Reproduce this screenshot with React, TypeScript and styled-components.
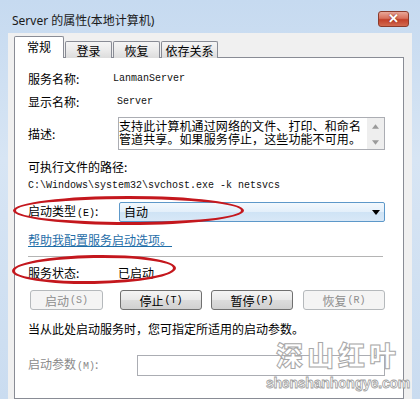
import React from 'react';
import styled, { createGlobalStyle } from 'styled-components';

const Global = createGlobalStyle`
  html, body { margin: 0; padding: 0; }
  body {
    width: 420px; height: 399px; overflow: hidden;
    font-family: "Noto Sans CJK SC", "Noto Sans", sans-serif;
    font-size: 12px; color: #000;
  }
`;

const Window = styled.div`
  position: relative;
  width: 420px; height: 399px; box-sizing: border-box;
  background: linear-gradient(180deg, #c6daf0 0%, #d7e5f4 40%, #cadcf0 100%);
  padding: 0 8px 0 8px;
  display: flex; flex-direction: column; overflow: hidden;
`;

const TitleBar = styled.div`
  height: 33px; flex: none;
  display: flex; align-items: center; justify-content: space-between;
  padding: 0 3px 0 4px;
`;

const Title = styled.div`
  font-family: "Noto Sans", "Noto Sans CJK SC", sans-serif;
  font-size: 12px; color: #1a1a1a; margin-top: 6px;
`;

const CloseBtn = styled.div`
  width: 31px; height: 16px; box-sizing: border-box; margin-top: 4px;
  border: 1px solid #8b3b2c; border-radius: 3px;
  background: linear-gradient(180deg, #e9a798 0%, #d8705c 45%, #c2402a 55%, #d26a50 100%);
  display: flex; align-items: center; justify-content: center;
  color: #fff; font-family: "Liberation Sans", sans-serif; font-weight: bold; font-size: 13px;
  text-shadow: 0 0 2px #7a2010;
`;

const Body = styled.div`
  flex: 1; background: #f0f0f0;
  padding: 3px 8px 0 6px;
  display: flex; flex-direction: column;
`;

const TabStrip = styled.div`
  height: 22px; display: flex; align-items: flex-end; flex: none;
`;

const Tab = styled.div<{ $active?: boolean; $w: number }>`
  position: relative; z-index: ${p => (p.$active ? 2 : 0)};
  box-sizing: border-box; width: ${p => p.$w}px;
  height: ${p => (p.$active ? 22 : 17)}px;
  border: 1px solid #898c95; border-bottom: none;
  border-radius: 2px 2px 0 0;
  background: ${p => (p.$active ? '#fff' : 'linear-gradient(180deg, #f5f5f5 0%, #ebebeb 50%, #dcdcdc 100%)')};
  display: flex; align-items: center; justify-content: center;
  padding-bottom: ${p => (p.$active ? 3 : 0)}px;
  font-size: 12px; margin-left: ${p => (p.$active ? 0 : -1)}px;
  & + & { margin-left: ${p => (p.$active ? 0 : 1)}px; }
`;

const Panel = styled.div`
  flex: 1; margin-top: -1px; background: #fff;
  border: 1px solid #898c95;
  padding: 13px 18px 0 13px;
  display: flex; flex-direction: column;
`;

const Row = styled.div<{ $label: number; $mt: number }>`
  display: grid; grid-template-columns: ${p => p.$label}px 1fr;
  align-items: center; margin-top: ${p => p.$mt}px;
  line-height: 16px;
`;

const Label = styled.span<{ $disabled?: boolean }>`
  color: ${p => (p.$disabled ? '#8a8a8a' : '#000')};
  white-space: nowrap;
`;

const Mono = styled.span`
  font-family: "Liberation Mono", monospace; font-size: 10px; color: #111;
`;

const Line = styled.div<{ $mt: number }>`
  margin-top: ${p => p.$mt}px; line-height: 16px; white-space: nowrap;
`;

const DescBox = styled.div`
  height: 33px; box-sizing: border-box;
  border: 1px solid #abadb3; background: #fff;
  display: flex;
`;

const DescText = styled.div`
  flex: 1; font-size: 12px; line-height: 13px; padding: 1px 0 0 0; overflow: hidden;
  letter-spacing: 0.1px;
`;

const ScrollBar = styled.div`
  width: 17px; background: #eeeeee;
  display: flex; flex-direction: column; justify-content: space-between; align-items: center;
  padding: 6px 0 4px;
`;

const Combo = styled.div`
  height: 20px; box-sizing: border-box; margin-left: 1px;
  border: 1px solid #5d98c9; border-radius: 2px;
  background: linear-gradient(180deg, #f2f8fd 0%, #e3effa 50%, #cfe3f5 51%, #d8e8f7 100%);
  display: flex; align-items: center; justify-content: space-between;
  padding: 0 4px 0 4px;
`;

const Link = styled.a`
  color: #1f6ea8; text-decoration: underline; cursor: pointer;
`;

const Separator = styled.div`
  margin-top: 8px; height: 0; border-top: 1px solid #b4b4b4; margin-right: 2px;
`;

const ButtonRow = styled.div`
  display: flex; margin-top: 9px; margin-left: 2px;
`;

const Button = styled.div<{ $w: number; $ml: number; $disabled?: boolean }>`
  width: ${p => p.$w}px; height: 20px; box-sizing: border-box;
  margin-left: ${p => p.$ml}px;
  border: 1px solid ${p => (p.$disabled ? '#b5b9bc' : '#707070')};
  border-radius: 3px;
  background: ${p => (p.$disabled ? '#f4f4f4' : 'linear-gradient(180deg, #f4f4f4 0%, #e9e9e9 48%, #dcdcdc 52%, #d0d0d0 100%)')};
  color: ${p => (p.$disabled ? '#8d8d8d' : '#000')};
  display: flex; align-items: center; justify-content: center;
  font-size: 12px;
`;

const Key = styled.span`
  font-family: "Liberation Mono", monospace; font-size: 10px; margin-left: 1px;
`;

const ParamBox = styled.div`
  height: 21px; box-sizing: border-box;
  border: 1px solid #abadb3; background: #fff;
`;

const Ellipse = styled.div<{ $l: number; $t: number; $w: number; $h: number; $r: number }>`
  position: absolute; left: ${p => p.$l}px; top: ${p => p.$t}px;
  width: ${p => p.$w}px; height: ${p => p.$h}px; box-sizing: border-box;
  border: 3px solid #c4171d; border-radius: 50%;
  transform: rotate(${p => p.$r}deg);
  pointer-events: none;
`;

const Watermark = styled.div`
  position: absolute; left: 268px; top: 340px; width: 140px;
  display: flex; flex-direction: column; align-items: center;
  color: #fff; pointer-events: none;
`;

const WmBig = styled.div`
  font-family: "Noto Sans CJK SC", sans-serif; font-weight: 900;
  font-size: 27px; line-height: 29px; height: 29px; letter-spacing: 4px;
  -webkit-text-stroke: 1px #a8a8a8;
`;

const WmSmall = styled.div`
  font-family: "Liberation Sans", sans-serif; font-weight: bold;
  font-size: 14px; line-height: 16px; letter-spacing: -0.2px; margin-top: 6px;
  -webkit-text-stroke: 0.8px #a0a0a0;
`;

const Arrow = ({ up, size = 7, color = '#4a4a4a' }: { up?: boolean; size?: number; color?: string }) => (
  <svg width={size} height={Math.ceil(size / 2) + 1} viewBox="0 0 8 5">
    {up ? <polygon points="0,5 4,0 8,5" fill={color} /> : <polygon points="0,0 8,0 4,5" fill={color} />}
  </svg>
);

export default function App() {
  return (
    <>
      <Global />
      <Window>
        <TitleBar>
          <Title>Server 的属性(本地计算机)</Title>
          <CloseBtn>✕</CloseBtn>
        </TitleBar>
        <Body>
          <TabStrip>
            <Tab $active $w={50}>常规</Tab>
            <Tab $w={47}>登录</Tab>
            <Tab $w={47}>恢复</Tab>
            <Tab $w={57}>依存关系</Tab>
          </TabStrip>
          <Panel>
            <Row $label={85} $mt={0}>
              <Label>服务名称:</Label>
              <Mono>LanmanServer</Mono>
            </Row>
            <Row $label={89} $mt={7}>
              <Label>显示名称:</Label>
              <Mono>Server</Mono>
            </Row>
            <Row $label={90} $mt={7}>
              <Label>描述:</Label>
              <DescBox>
                <DescText>
                  支持此计算机通过网络的文件、打印、和命名管道共享。如果服务停止，这些功能不可用。
                </DescText>
                <ScrollBar>
                  <Arrow up size={7} color="#9a9a9a" />
                  <Arrow size={7} color="#9a9a9a" />
                </ScrollBar>
              </DescBox>
            </Row>
            <Line $mt={9}>可执行文件的路径:</Line>
            <Line $mt={0}><Mono>C:\Windows\system32\svchost.exe -k netsvcs</Mono></Line>
            <Row $label={90} $mt={8}>
              <Label>启动类型<Key>(E)</Key>:</Label>
              <Combo>
                <span>自动</span>
                <Arrow size={8} color="#000" />
              </Combo>
            </Row>
            <Line $mt={10}><Link>帮助我配置服务启动选项。</Link></Line>
            <Separator />
            <Row $label={90} $mt={8}>
              <Label>服务状态:</Label>
              <span>已启动</span>
            </Row>
            <ButtonRow>
              <Button $disabled $w={73} $ml={0}>启动<Key>(S)</Key></Button>
              <Button $w={82} $ml={17}>停止<Key>(T)</Key></Button>
              <Button $w={82} $ml={9}>暂停<Key>(P)</Key></Button>
              <Button $disabled $w={82} $ml={10}>恢复<Key>(R)</Key></Button>
            </ButtonRow>
            <Line $mt={11}>当从此处启动服务时，您可指定所适用的启动参数。</Line>
            <Row $label={109} $mt={18}>
              <Label $disabled>启动参数<Key>(M)</Key>:</Label>
              <ParamBox />
            </Row>
          </Panel>
        </Body>
        <Ellipse $l={13} $t={196} $w={231} $h={29} $r={0} />
        <Ellipse $l={12} $t={255} $w={164} $h={29} $r={-1} />
        <Watermark>
          <WmBig>深山红叶</WmBig>
          <WmSmall>shenshanhongye.com</WmSmall>
        </Watermark>
      </Window>
    </>
  );
}
